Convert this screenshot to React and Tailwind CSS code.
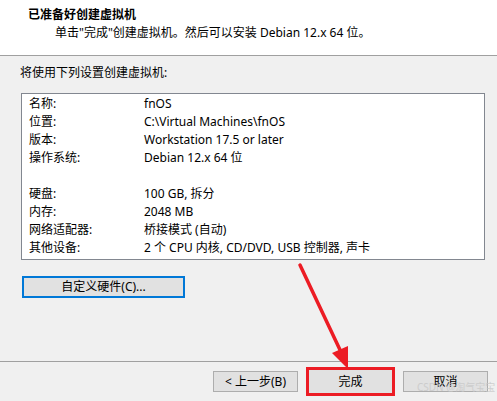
import React from "react";

const font = { fontFamily: '"Noto Sans", "Noto Sans CJK SC", sans-serif' };

const rows = [
  ["名称:", "fnOS"],
  ["位置:", "C:\\Virtual Machines\\fnOS"],
  ["版本:", "Workstation 17.5 or later"],
  ["操作系统:", "Debian 12.x 64 位"],
  ["", ""],
  ["硬盘:", "100 GB, 拆分"],
  ["内存:", "2048 MB"],
  ["网络适配器:", "桥接模式 (自动)"],
  ["其他设备:", "2 个 CPU 内核, CD/DVD, USB 控制器, 声卡"],
];

export default function App() {
  return (
    <div
      className="relative w-[497px] h-[401px] flex flex-col bg-[#f0f0f0] text-[12px] text-black overflow-hidden"
      style={font}
    >
      <div className="h-[56px] bg-white border-b border-[#a0a0a0] flex flex-col pt-[6px]">
        <div className="pl-[28px] h-[18px] leading-[18px] font-bold">已准备好创建虚拟机</div>
        <div className="pl-[55px] h-[18px] leading-[18px]">
          单击"完成"创建虚拟机。然后可以安装 Debian 12.x 64 位。
        </div>
      </div>

      <div className="flex-1 flex flex-col pt-[8px]">
        <div className="pl-[20px] h-[18px] leading-[18px]">将使用下列设置创建虚拟机:</div>
        <div className="ml-[21px] mt-[11px] w-[464px] h-[167px] bg-white border border-[#828790] pt-[1px]">
          {rows.map(([k, v], i) => (
            <div key={i} className="flex h-[18px] leading-[18px]">
              <div className="w-[122px] pl-[7px]">{k}</div>
              <div>{v}</div>
            </div>
          ))}
        </div>
        <div className="ml-[22px] mt-[16px] w-[163px] h-[22px] bg-[#e1e1e1] border-2 border-[#0078d7] flex items-center justify-center leading-none">
          自定义硬件(C)...
        </div>
      </div>

      <div className="h-[40px] border-t border-[#a0a0a0] flex items-center justify-end pr-[9px] gap-[8px]">
        <div className="w-[85px] h-[21px] bg-[#e1e1e1] border border-[#adadad] flex items-center justify-center leading-none">
          &lt; 上一步(B)
        </div>
        <div className="w-[89px] h-[29px] border-[3px] border-[#ec1c24] p-0">
          <div className="w-full h-full bg-[#e1e1e1] flex items-center justify-center leading-none">
            完成
          </div>
        </div>
        <div className="w-[85px] h-[21px] bg-[#e1e1e1] border border-[#adadad] flex items-center justify-center leading-none">
          取消
        </div>
      </div>

      <div className="absolute left-[417px] top-[382px] text-[10px] leading-none text-[#c8c8c8] opacity-80 pointer-events-none whitespace-nowrap">
        CSDN @淘气宝宝
      </div>

      <svg className="absolute left-0 top-0 pointer-events-none" width="497" height="401">
        <line x1="300" y1="265" x2="341" y2="352" stroke="#ec1c24" strokeWidth="3.5" strokeLinecap="round" />
        <polygon points="348,369 332,353 348,346" fill="#ec1c24" />
      </svg>
    </div>
  );
}
